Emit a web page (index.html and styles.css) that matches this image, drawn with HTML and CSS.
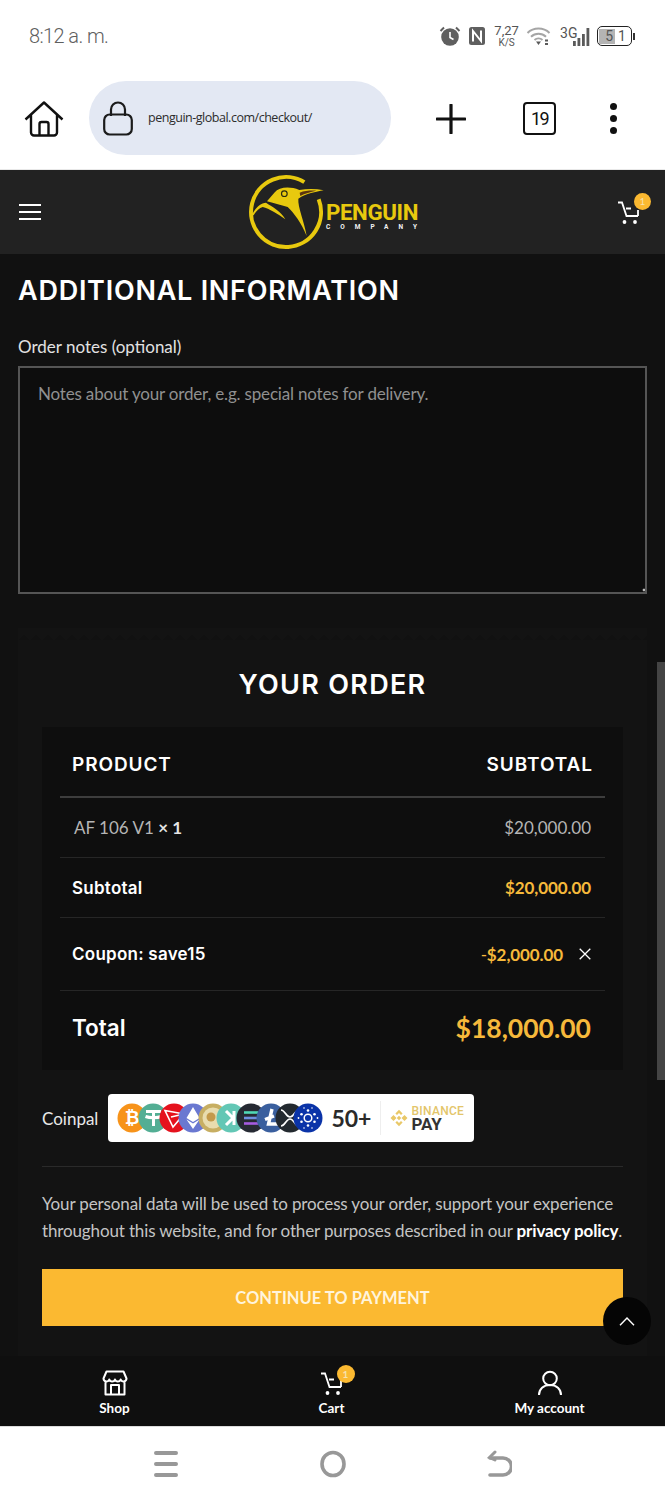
FILE: index.html
```html
<!DOCTYPE html>
<html lang="en">
<head>
<meta charset="utf-8">
<title>Checkout</title>
<link rel="stylesheet" href="styles.css">
</head>
<body>
<div class="screen">
  <div class="status">
    <span class="time">8:12 a. m.</span>
    <div class="status-icons">
      <svg class="ic-alarm" width="22" height="22" viewBox="0 0 22 22"><circle cx="11" cy="12" r="8.8" fill="#5f5f5f"/><path d="M11 7v5.5l3.5 2" fill="none" stroke="#fff" stroke-width="1.6"/><path d="M1.5 6 5 2.5M20.500 6 17 2.500" stroke="#5f5f5f" stroke-width="2"/></svg>
      <svg class="ic-nfc" width="18" height="20" viewBox="0 0 18 20"><rect x="1" y="1" width="16" height="18" rx="2.500" fill="#5f5f5f"/><path d="M5 15.500V5l8 10V4.500" fill="none" stroke="#fff" stroke-width="2"/></svg>
      <div class="speed"><span>7,27</span><span class="speed-unit">K/S</span></div>
      <svg class="ic-wifi" width="25" height="20" viewBox="0 0 25 20"><path d="M1.500 7a16 16 0 0 1 22 0M5 10.800a11 11 0 0 1 15 0M8.500 14a6 6 0 0 1 8 0" fill="none" stroke="#a5a5a5" stroke-width="2"/><path d="M10 15.500h5l-2.500 3.500z" fill="#5a5a5a"/><path d="M19 14.500h3M19 18h3" stroke="#5a5a5a" stroke-width="2"/></svg>
      <div class="signal">
        <span class="net">3G</span>
        <svg width="17" height="20" viewBox="0 0 17 20"><rect x="0" y="14" width="2.800" height="5" fill="#5a5a5a"/><rect x="4.500" y="11" width="2.800" height="8" fill="#5a5a5a"/><rect x="9" y="7" width="2.800" height="12" fill="#5a5a5a"/><rect x="13.500" y="1" width="2.800" height="18" fill="#5a5a5a"/></svg>
      </div>
      <div class="battery"><div class="battery-body"><span class="battery-fill">5</span><span>1</span></div><div class="battery-tip"></div></div>
    </div>
  </div>

  <div class="browser">
    <svg class="ic-home" width="40" height="36" viewBox="0 0 40 36"><path d="M1.500 18.500 20 1.500l18.500 17M7 14v17.500a3 3 0 0 0 3 3h20a3 3 0 0 0 3-3V14M15.500 34.500V23a2 2 0 0 1 2-2h5a2 2 0 0 1 2 2v11.500" fill="none" stroke="#111" stroke-width="2.400" stroke-linejoin="round"/></svg>
    <div class="url-pill">
      <svg width="30" height="36" viewBox="0 0 30 36"><path d="M8 16V9.500a7 7 0 0 1 14 0V16" fill="none" stroke="#1b1b1b" stroke-width="2.200"/><rect x="1.200" y="14.500" width="27.600" height="20" rx="5.500" fill="none" stroke="#1b1b1b" stroke-width="2.200"/></svg>
      <span class="url">penguin-global.com/checkout/</span>
    </div>
    <svg class="ic-plus" width="30" height="30" viewBox="0 0 30 30"><path d="M15 1v28M1 15h28" stroke="#111" stroke-width="3.200" stroke-linecap="round"/></svg>
    <div class="tabs">19</div>
    <div class="dots"><i></i><i></i><i></i></div>
  </div>

  <header class="site-header">
    <svg class="ic-menu" width="24" height="18" viewBox="0 0 24 18"><path d="M1 2h22M1 9h22M1 16h22" stroke="#fff" stroke-width="2"/></svg>
    <div class="logo">
      <svg width="90" height="80" viewBox="0 0 270 240">
        <path d="M190 30.500A105 105 0 1 0 233 82" fill="none" stroke="#e8c90e" stroke-width="12"/>
        <path d="M100 62C115 45 145 42 175 54C200 50 225 50 248 55C225 60 195 64 172 80C170 105 190 150 197 192C180 150 160 125 140 105C120 100 95 92 78 88Z" fill="#e8c90e"/>
        <path d="M33 128C42 110 58 92 75 92C95 105 120 118 133 142C110 125 85 110 65 105C55 108 45 118 38 130Z" fill="#e8c90e"/>
        <path d="M176 62C192 56 208 55 226 56C208 60 192 64 178 72Z" fill="#5a3410"/>
        <circle cx="130" cy="65" r="8.500" fill="none" stroke="#2a2a10" stroke-width="3.500"/>
      </svg>
      <div class="logo-text">
        <span class="logo-name">PENGUIN</span>
        <span class="logo-sub">COMPANY</span>
      </div>
    </div>
    <div class="cart-wrap cart-head">
      <svg width="24" height="24" viewBox="0 0 24 24"><path d="M1 1.500h4l4.500 13.500H21M9 7.500h5M21 9v6" fill="none" stroke="#fff" stroke-width="1.800"/><circle cx="7.500" cy="21" r="1.900" fill="#fff"/><circle cx="18" cy="21" r="1.900" fill="#fff"/></svg>
      <span class="badge">1</span>
    </div>
  </header>

  <main class="content">
    <h2 class="title">ADDITIONAL INFORMATION</h2>
    <label class="notes-label" for="notes">Order notes (optional)</label>
    <textarea class="notes" id="notes" placeholder="Notes about your order, e.g. special notes for delivery."></textarea>

    <div class="zigzag"></div>
    <section class="order">
      <h3 class="order-title">YOUR ORDER</h3>
      <div class="table">
        <div class="row row-head"><span>PRODUCT</span><span>SUBTOTAL</span></div>
        <div class="row row-item"><span class="item-name">AF 106 V1 <b>× 1</b></span><span>$20,000.00</span></div>
        <div class="row row-sub"><span class="row-label">Subtotal</span><span class="amount">$20,000.00</span></div>
        <div class="row row-coupon"><span class="row-label">Coupon: save15</span><span class="coupon-val"><span class="amount"><span class="minus">-</span>$2,000.00</span><svg width="12" height="12" viewBox="0 0 12 12"><path d="M.7.7l10.600 10.600M11.300.7.700 11.300" stroke="#fff" stroke-width="1.300"/></svg></span></div>
        <div class="row row-total"><span class="total-label">Total</span><span class="total-val">$18,000.00</span></div>
      </div>

      <div class="pay">
        <span class="pay-name">Coinpal</span>
        <div class="pay-badge">
          <svg class="coins" width="206" height="30" viewBox="0 0 206 30">
            <circle cx="15" cy="15" r="14.500" fill="#f7931a"/>
            <text x="15" y="21" class="coin-t" fill="#fff">₿</text>
            <circle cx="36" cy="15" r="14.500" fill="#53ae94"/>
            <path d="M29 8.500h15M36.500 8.500V23M28.500 13.500c4 1.500 12 1.500 16 0" fill="none" stroke="#fff" stroke-width="3"/>
            <circle cx="57" cy="15" r="14.500" fill="#e5121d"/>
            <path d="M48 7.500 67 11 56 24zM48 7.500 56 24M67 11 54 14" fill="none" stroke="#fff" stroke-width="1.600"/>
            <circle cx="76" cy="15" r="14.500" fill="#6a78d1"/>
            <path d="M76 4l-6.500 11L76 19l6.500-4zM69.500 16.500 76 26l6.500-9.500L76 20.500z" fill="#fff"/>
            <circle cx="96" cy="15" r="14.500" fill="#c7ae62"/>
            <circle cx="96" cy="15" r="10.500" fill="#e8dcae"/>
            <circle cx="94" cy="14" r="4.500" fill="#c49a4a"/>
            <circle cx="114" cy="15" r="14.500" fill="#63c7b5"/>
            <path d="M117 8v14M109 8l7 7-7 7" fill="none" stroke="#fff" stroke-width="3"/>
            <circle cx="134" cy="15" r="14.500" fill="#262a33"/>
            <path d="M127 9.500h14" stroke="#4fd8b5" stroke-width="2.600"/><path d="M127 15h14" stroke="#6f8fe0" stroke-width="2.600"/><path d="M127 20.500h14" stroke="#a65ce0" stroke-width="2.600"/>
            <circle cx="154" cy="15" r="14.500" fill="#3a5f9e"/>
            <path d="M155 6l-3.500 15H162M148 16.500l9-3.500" fill="none" stroke="#fff" stroke-width="3.400"/>
            <circle cx="173" cy="15" r="14.500" fill="#23292f"/>
            <path d="M164 7c4 0 5 7 9 7s5-7 9-7M164 23c4 0 5-7 9-7s5 7 9 7" fill="none" stroke="#fff" stroke-width="1.700"/>
            <circle cx="191" cy="15" r="14.500" fill="#0a33a8"/>
            <circle cx="191" cy="15" r="3.800" fill="none" stroke="#fff" stroke-width="1.500"/>
            <g fill="#fff"><circle cx="191" cy="7.500" r="1.300"/><circle cx="191" cy="22.500" r="1.300"/><circle cx="184.500" cy="11.200" r="1.300"/><circle cx="197.500" cy="11.200" r="1.300"/><circle cx="184.500" cy="18.800" r="1.300"/><circle cx="197.500" cy="18.800" r="1.300"/><circle cx="181.500" cy="15" r=".9"/><circle cx="200.500" cy="15" r=".9"/><circle cx="187" cy="5" r=".8"/><circle cx="195" cy="5" r=".8"/><circle cx="187" cy="25" r=".8"/><circle cx="195" cy="25" r=".8"/></g>
          </svg>
          <span class="plus50">50+</span>
          <span class="pay-div"></span>
          <svg width="18" height="18" viewBox="0 0 18 18"><path d="M9 .8 12.600 4.400 11 6 9 4 7 6 5.400 4.400zM3.500 6 6.500 9 3.500 12 .5 9zM14.500 6 17.500 9 14.500 12 11.500 9zM9 17.200 5.400 13.600 7 12 9 14 11 12 12.600 13.600zM9 6.800 11.200 9 9 11.200 6.800 9z" fill="#e9c868"/></svg>
          <div class="binance"><span class="bin-top">BINANCE</span><span class="bin-pay">PAY</span></div>
        </div>
      </div>

      <div class="sep"></div>
      <p class="privacy">Your personal data will be used to process your order, support your experience<br>throughout this website, and for other purposes described in our <b>privacy policy</b>.</p>
      <button class="pay-btn" type="button">CONTINUE TO PAYMENT</button>
    </section>
  </main>

  <nav class="bottom-nav">
    <div class="nav-item">
      <svg width="26" height="26" viewBox="0 0 26 26"><path d="M4.500 1.500h17l3 7a3 3 0 0 1-5.800 1 3 3 0 0 1-5.700 0 3 3 0 0 1-5.700 0 3 3 0 0 1-5.800-1zM3.500 12v12.500h19V12M9 24.500V15h8v9.500" fill="none" stroke="#fff" stroke-width="2" stroke-linejoin="round"/></svg>
      <span>Shop</span>
    </div>
    <div class="nav-item">
      <div class="cart-wrap cart-nav">
        <svg width="24" height="24" viewBox="0 0 24 24"><path d="M1 1.500h4l4.500 13.500H21M9 7.500h5M21 9v6" fill="none" stroke="#fff" stroke-width="1.800"/><circle cx="7.500" cy="21" r="1.900" fill="#fff"/><circle cx="18" cy="21" r="1.900" fill="#fff"/></svg>
        <span class="badge badge-nav">1</span>
      </div>
      <span>Cart</span>
    </div>
    <div class="nav-item">
      <svg width="26" height="26" viewBox="0 0 26 26"><circle cx="13" cy="8.500" r="6.800" fill="none" stroke="#fff" stroke-width="2"/><path d="M2 25c0-6 4.500-10 11-10s11 4 11 10" fill="none" stroke="#fff" stroke-width="2"/></svg>
      <span>My account</span>
    </div>
  </nav>

  <div class="system-nav">
    <svg width="26" height="28" viewBox="0 0 26 28"><path d="M3 3h20M3 14h20M3 25h20" stroke="#989898" stroke-width="4" stroke-linecap="round"/></svg>
    <svg width="26" height="28" viewBox="0 0 26 28"><ellipse cx="13" cy="14" rx="11" ry="11.500" fill="none" stroke="#989898" stroke-width="3.600"/></svg>
    <svg width="26" height="28" viewBox="0 0 26 28"><path d="M4 25h13a7.500 7.500 0 0 0 0-17H4" fill="none" stroke="#989898" stroke-width="3.600" stroke-linecap="round"/><path d="M9 2 3.500 7.500 9 10" fill="none" stroke="#989898" stroke-width="3" stroke-linecap="round"/></svg>
  </div>

  <div class="scrollbar"></div>
  <button class="to-top" type="button" aria-label="Back to top"><svg width="16" height="9" viewBox="0 0 16 9"><path d="M1 8.300 8 1l7 7.300" fill="none" stroke="#fff" stroke-width="1.400"/></svg></button>
</div>
</body>
</html>
```
FILE: styles.css
```css
* { box-sizing: border-box; }
html, body { margin: 0; padding: 0; background: #fff; }
.screen {
  position: relative;
  width: 665px;
  height: 1500px;
  overflow: hidden;
  display: flex;
  flex-direction: column;
  font-family: Lato, "Liberation Sans", sans-serif;
}

/* status bar */
.status {
  height: 70px;
  flex: none;
  background: #fff;
  display: flex;
  align-items: center;
  justify-content: space-between;
  padding: 2px 30px 0 29px;
}
.time { font-family: Roboto, sans-serif; font-weight: 300; font-size: 20px; color: #5f5f5f; letter-spacing: -.6px; }
.status-icons { display: flex; align-items: center; }
.ic-alarm { margin-right: 7px; }
.ic-nfc { margin-right: 9px; }
.speed { display: flex; flex-direction: column; align-items: center; width: 24px; margin-right: 7px; font-family: Roboto, sans-serif; font-size: 13px; line-height: 12px; color: #555; }
.speed-unit { font-size: 10px; line-height: 11px; }
.ic-wifi { margin-right: 9.500px; }
.signal { display: flex; align-items: flex-end; margin-right: 7px; }
.net { font-family: Roboto, sans-serif; font-size: 14px; color: #555; line-height: 14px; margin-bottom: 7px; margin-right: -5px; }
.battery { display: flex; align-items: center; }
.battery-body { width: 35px; height: 20px; border: 1.500px solid #222; border-radius: 5px; padding: 1.500px; display: flex; font-family: Roboto, sans-serif; font-size: 14px; line-height: 14px; color: #555; }
.battery-fill { width: 16px; background: #b4b4b4; text-align: right; padding-right: 2px; margin-right: 3px; }
.battery-tip { width: 2px; height: 7px; background: #333; margin-left: 1.500px; }

/* browser bar */
.browser {
  height: 100px;
  flex: none;
  background: #fff;
  border-bottom: 1px solid #e8e8e8;
  display: flex;
  align-items: center;
  padding: 0 0 2px 24px;
}
.ic-home { flex: none; margin-right: 25px; }
.url-pill { width: 302px; height: 74px; margin-bottom: 2px; border-radius: 37px; background: #e3e8f3; display: flex; align-items: center; padding-left: 14px; margin-right: 45px; }
.url { margin-left: 15px; font-family: "Open Sans", sans-serif; font-size: 12.500px; letter-spacing: -.48px; color: #2c2c2c; }
.ic-plus { flex: none; margin-right: 57px; }
.tabs { width: 33px; height: 33px; border: 2.200px solid #111; border-radius: 4px; display: flex; align-items: center; justify-content: center; font-family: Roboto, sans-serif; font-size: 18px; letter-spacing: -1.500px; color: #111; margin-right: 54px; }
.dots { display: flex; flex-direction: column; gap: 5px; }
.dots i { display: block; width: 7px; height: 7px; border-radius: 50%; background: #111; }

/* site header */
.site-header {
  height: 84px;
  flex: none;
  background: #222;
  display: flex;
  align-items: center;
  justify-content: space-between;
  padding: 0 24px 0 18px;
}
.logo { display: flex; align-items: center; }
.logo-text { display: flex; flex-direction: column; align-items: flex-start; margin-left: -5px; margin-top: 8px; }
.logo-name { font-family: Roboto, sans-serif; font-weight: 700; font-size: 22.300px; line-height: 22px; color: #e8c90e; letter-spacing: -.4px; }
.logo-sub { width: 91px; white-space: nowrap; font-family: Roboto, sans-serif; font-weight: 700; font-size: 6.500px; line-height: 8px; letter-spacing: 10px; color: #f2f2f2; }
.cart-wrap { position: relative; width: 24px; height: 24px; display: block; }
.cart-head { margin-top: 2px; }
.badge { position: absolute; top: -8px; right: -10px; width: 17px; height: 17px; border-radius: 50%; background: #fbb931; color: #f6e2ae; font-size: 10px; line-height: 17px; text-align: center; }

/* content */
.content {
  flex: 1;
  min-height: 0;
  overflow: hidden;
  background: #111;
  padding: 0 18px;
}
.title { margin: 20px 0 0; font-family: Inter, sans-serif; font-weight: 600; font-size: 27px; line-height: 34px; color: #fff; letter-spacing: .75px; }
.notes-label { display: block; margin-top: 27px; font-size: 17px; line-height: 24px; color: #e2e2e2; }
.notes {
  display: block;
  width: 629px;
  height: 228px;
  margin-top: 7px;
  padding: 14px 18px;
  background: radial-gradient(circle at calc(100% - 1px) calc(100% - 2px), #bbb 1.200px, transparent 1.700px), #0d0d0d;
  border: 2px solid #555;
  border-radius: 0;
  resize: none;
  font-family: Lato, sans-serif;
  font-size: 17px;
  line-height: 24px;
  letter-spacing: -.18px;
  color: #fff;
  outline: none;
}
.notes::placeholder { color: #909090; opacity: 1; }

.zigzag {
  height: 12px;
  margin-top: 34px;
  background-image: linear-gradient(45deg, transparent 50%, #131313 50%), linear-gradient(-45deg, transparent 50%, #131313 50%);
  background-size: 12px 12px;
}
.order { background: #131313; padding: 28px 24px 40px; }
.order-title { margin: 0; text-align: center; font-family: Inter, sans-serif; font-weight: 600; font-size: 27px; line-height: 34px; color: #fff; letter-spacing: 1.300px; }
.table { margin-top: 25px; height: 343px; background: #0e0e0e; padding: 0 18px; }
.row { display: flex; justify-content: space-between; align-items: center; padding: 0 14px; border-bottom: 1px solid #262626; }
.row:last-child { border-bottom: 0; }
.row-head { height: 71px; padding: 6px 12px 0; border-bottom: 2px solid #3d3d3d; font-family: Inter, sans-serif; font-weight: 600; font-size: 19px; letter-spacing: .9px; color: #fff; }
.row-item { height: 60px; font-size: 17px; color: #b5b5b5; }
.item-name b { color: #e4e4e4; }
.row-sub { height: 60px; padding-left: 12px; }
.row-coupon { height: 73px; padding-left: 12px; }
.row-total { height: 73px; padding-left: 12px; }
.row-label { font-family: Inter, sans-serif; font-weight: 600; font-size: 17px; letter-spacing: .25px; color: #fff; }
.amount { font-weight: 700; font-size: 17px; letter-spacing: -.1px; color: #f6b93b; }
.minus { font-weight: 400; }
.coupon-val { display: flex; align-items: center; gap: 16px; }
.total-label { font-family: Inter, sans-serif; font-weight: 600; font-size: 22.500px; color: #fff; }
.total-val { font-weight: 700; font-size: 26.500px; color: #f6b93b; }

.pay { margin-top: 24px; display: flex; align-items: center; height: 48px; }
.pay-name { font-size: 17px; color: #e8e8e8; margin-right: 10px; }
.pay-badge { width: 366px; height: 48px; background: #fff; border-radius: 4px; display: flex; align-items: center; padding-left: 9px; color: #222; }
.coin-t { font-family: "DejaVu Sans", sans-serif; font-weight: 700; font-size: 18px; text-anchor: middle; }
.plus50 { margin-left: 8px; font-family: Lato, sans-serif; font-weight: 700; font-size: 23px; color: #2a2a2a; }
.pay-div { width: 1px; height: 34px; background: #eee; margin: 0 9px; }
.binance { display: flex; flex-direction: column; margin-left: 3px; margin-top: 1px; }
.bin-top { font-family: Roboto, sans-serif; font-weight: 500; font-size: 12px; line-height: 11px; letter-spacing: .3px; color: #e3c56a; }
.bin-pay { font-family: Roboto, sans-serif; font-weight: 700; font-size: 17px; line-height: 15px; color: #333; }
.sep { margin-top: 24px; height: 1px; background: #2a2a2a; }
.privacy { margin: 23px 0 0; font-size: 17px; line-height: 27px; color: #c4c4c4; letter-spacing: -.14px; white-space: nowrap; }
.privacy b { color: #fff; }
.pay-btn { display: block; width: 100%; height: 57px; margin-top: 25px; border: 0; background: #fbb931; color: #fff4dc; font-family: Lato, sans-serif; font-weight: 700; font-size: 16.500px; }

/* bottom nav */
.bottom-nav {
  height: 70px;
  flex: none;
  background: #0f0f0f;
  display: grid;
  grid-template-columns: 229px 205px 231px;
}
.nav-item { display: flex; flex-direction: column; align-items: center; padding-top: 14px; color: #fff; font-weight: 700; font-size: 13.500px; line-height: 18px; gap: 3px; }
.cart-nav { margin: 2px 0 0; }
.badge-nav { top: -7px; right: -11px; width: 18px; height: 18px; line-height: 18px; }

/* system nav */
.system-nav {
  height: 74px;
  flex: none;
  background: #fff;
  border-top: 1px solid #ddd;
  display: flex;
  align-items: center;
  justify-content: space-between;
  padding: 0 153px;
}

/* overlays */
.scrollbar { position: absolute; right: 0; top: 662px; width: 8px; height: 418px; background: #444; }
.to-top { position: absolute; left: 603px; top: 1297px; width: 48px; height: 48px; border: 0; padding: 0; border-radius: 50%; background: #050505; display: flex; align-items: center; justify-content: center; }
```
